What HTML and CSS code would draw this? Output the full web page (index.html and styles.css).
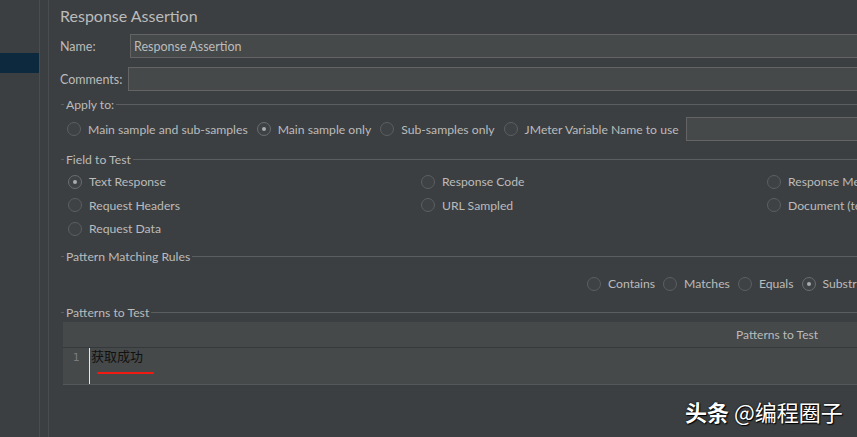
FILE: index.html
```html
<!DOCTYPE html>
<html>
<head>
<meta charset="utf-8">
<link rel="stylesheet" href="styles.css">
</head>
<body>
<div class="app">
  <div class="tree">
    <div class="tree-row selected"></div>
  </div>
  <div class="gutter"></div>
  <div class="main">
    <div class="title">Response Assertion</div>
    <div class="form-row">
      <span class="field-label name-label">Name:</span>
      <div class="input">Response Assertion</div>
    </div>
    <div class="form-row comments-row">
      <span class="field-label comments-label">Comments:</span>
      <div class="input"></div>
    </div>

    <div class="legend apply-legend"><span class="legend-text">Apply to:</span></div>
    <div class="apply-row">
      <label class="radio"><span class="circle"></span><span>Main sample and sub-samples</span></label>
      <label class="radio"><span class="circle on"></span><span>Main sample only</span></label>
      <label class="radio"><span class="circle"></span><span>Sub-samples only</span></label>
      <label class="radio"><span class="circle"></span><span>JMeter Variable Name to use</span></label>
      <div class="input var-input"></div>
    </div>

    <div class="legend field-legend"><span class="legend-text">Field to Test</span></div>
    <div class="field-grid">
      <label class="radio"><span class="circle on"></span><span>Text Response</span></label>
      <label class="radio"><span class="circle"></span><span>Response Code</span></label>
      <label class="radio"><span class="circle"></span><span>Response Message</span></label>
      <label class="radio"><span class="circle"></span><span>Request Headers</span></label>
      <label class="radio"><span class="circle"></span><span>URL Sampled</span></label>
      <label class="radio"><span class="circle"></span><span>Document (text)</span></label>
      <label class="radio"><span class="circle"></span><span>Request Data</span></label>
    </div>

    <div class="legend rules-legend"><span class="legend-text">Pattern Matching Rules</span></div>
    <div class="rules-row">
      <label class="radio"><span class="circle"></span><span>Contains</span></label>
      <label class="radio"><span class="circle"></span><span>Matches</span></label>
      <label class="radio"><span class="circle"></span><span>Equals</span></label>
      <label class="radio"><span class="circle on"></span><span>Substring</span></label>
    </div>

    <div class="legend patterns-legend"><span class="legend-text">Patterns to Test</span></div>
    <div class="table">
      <div class="table-head"><span class="head-text">Patterns to Test</span></div>
      <div class="table-row">
        <span class="line-no">1</span>
        <span class="cursor"></span>
        <div class="cell">
          <span class="cell-text">获取成功</span>
          <span class="red-mark"></span>
        </div>
      </div>
    </div>
  </div>
</div>
<div class="watermark"><b>头条</b> @编程圈子</div>
</body>
</html>
```
FILE: styles.css
```css
html, body {
  margin: 0;
  padding: 0;
  width: 857px;
  height: 437px;
  overflow: hidden;
  background: #3c3f41;
}

body {
  font-family: Lato, "Noto Sans", sans-serif;
  font-size: 12.2px;
  color: #bbbbbb;
  position: relative;
}

.app {
  display: flex;
  height: 437px;
}

.tree {
  width: 39px;
  flex: none;
  border-right: 1px solid #4a4d4f;
  padding-top: 53px;
  box-sizing: content-box;
}

.tree-row.selected {
  height: 20px;
  background: #0d293e;
}

.gutter {
  width: 8px;
  flex: none;
  border-right: 1px solid #4a4d4f;
}

.main {
  width: 900px;
  flex: none;
  padding-left: 11px;
}

.title {
  height: 34px;
  line-height: 32px;
  font-size: 16px;
}

.form-row {
  display: flex;
  align-items: center;
  height: 24px;
  font-size: 12.5px;
}

.comments-row {
  margin-top: 9px;
}

.field-label {
  flex: none;
  padding-top: 1px;
}

.name-label {
  width: 70px;
}

.comments-label {
  width: 68px;
}

.input {
  flex: 1;
  height: 24px;
  box-sizing: border-box;
  background: #45494a;
  border: 1px solid #646464;
  padding: 1px 3px 0;
  line-height: 22px;
  color: #bbbbbb;
}

.legend {
  display: flex;
  align-items: center;
  height: 15px;
  margin-left: 1px;
}

.legend::before {
  content: "";
  width: 3px;
  height: 1px;
  background: #5b5d5f;
  flex: none;
}

.legend::after {
  content: "";
  flex: 1;
  height: 1px;
  background: #5b5d5f;
}

.legend-text {
  padding: 0 2px;
  line-height: 15px;
}

.apply-legend { margin-top: 6px; }
.field-legend { margin-top: 11px; }
.rules-legend { margin-top: 8px; }
.patterns-legend { margin-top: 9px; }

.radio {
  display: flex;
  align-items: center;
  gap: 7px;
  white-space: nowrap;
}

.circle {
  width: 14px;
  height: 14px;
  box-sizing: border-box;
  border-radius: 50%;
  border: 1px solid #5c5f61;
  background: #3e4244;
  flex: none;
  display: flex;
  align-items: center;
  justify-content: center;
}

.circle.on {
  border-color: #6a6d6f;
}

.circle.on::after {
  content: "";
  width: 4px;
  height: 4px;
  border-radius: 50%;
  background: #a9abad;
}

.apply-row {
  display: flex;
  align-items: center;
  height: 24px;
  margin-top: 5px;
  padding-left: 7px;
  gap: 9px;
}

.var-input {
  margin-left: -2px;
}

.field-grid {
  display: grid;
  grid-template-columns: 353px 346px 1fr;
  grid-auto-rows: 23.5px;
  align-items: center;
  margin-top: 3px;
  padding-left: 8px;
}

.rules-row {
  display: flex;
  align-items: center;
  height: 24px;
  margin-top: 8px;
  padding-left: 527px;
  gap: 8px;
}

.table {
  margin-top: 2px;
  margin-left: 3px;
  background: #45494a;
}

.table-head {
  height: 25px;
  border-bottom: 1px solid #36393b;
  display: flex;
  align-items: center;
  padding-left: 673px;
  font-size: 12px;
}

.table-row {
  display: flex;
  height: 36px;
  border-bottom: 1px solid #55585a;
}

.line-no {
  width: 26px;
  flex: none;
  text-align: center;
  color: #7a7d7f;
  font-family: "DejaVu Sans Mono", monospace;
  font-size: 11px;
  padding-top: 3px;
  box-sizing: border-box;
}

.cursor {
  width: 1px;
  flex: none;
  background: #e6e6e6;
}

.cell {
  display: flex;
  flex-direction: column;
  padding-left: 1px;
}

.cell-text {
  font-family: "Noto Sans CJK SC", sans-serif;
  font-size: 13px;
  line-height: 15px;
  color: #111111;
}

.red-mark {
  width: 57px;
  height: 2px;
  margin-top: 9px;
  margin-left: 6px;
  border-radius: 1px;
  background: #f01a12;
}

.watermark {
  position: absolute;
  left: 685px;
  top: 397px;
  font-family: "Noto Sans CJK SC", sans-serif;
  font-size: 22px;
  line-height: 28px;
  color: #ffffff;
  text-shadow: 1px 1px 1px #000000, 0 0 2px #000000;
  white-space: nowrap;
}

.watermark b {
  font-weight: 700;
}
```
